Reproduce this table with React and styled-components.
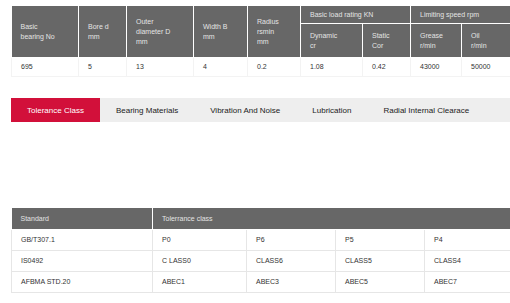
import React from "react";
import styled, { createGlobalStyle } from "styled-components";

const GlobalStyle = createGlobalStyle`
  html, body {
    margin: 0;
    padding: 0;
    background: #fff;
    overflow: hidden;
  }
  body {
    font-family: "Liberation Sans", Arial, sans-serif;
    color: #333;
  }
`;

const Page = styled.div`
  width: 510px;
  height: 303px;
  padding: 6px 0 0 11px;
  box-sizing: border-box;
  overflow: hidden;
`;

const Table = styled.table`
  border-collapse: collapse;
  table-layout: fixed;
  width: ${({ $width }) => $width}px;
  font-size: 7px;
`;

const Head = styled.th`
  background: #676767;
  color: #e4e4e4;
  font-weight: normal;
  text-align: left;
  vertical-align: middle;
  line-height: 10px;
  padding: 0 0 0 9px;
  height: ${({ $h }) => $h || 17}px;
  border: 1px solid #fff;
  border-top: none;
  &:first-child {
    border-left: none;
  }
`;

const Cell = styled.td`
  height: ${({ $h }) => $h || 18}px;
  padding: 0 0 0 9px;
  border: 1px solid ${({ $faint }) => ($faint ? "#f3f3f3" : "#e6e6e6")};
  color: #333;
  line-height: 10px;
`;

const TabBar = styled.div`
  display: flex;
  margin-top: 21px;
  width: 510px;
  height: 24px;
  background: #eeeeee;
`;

const Tab = styled.div`
  display: flex;
  align-items: center;
  padding: 0 16px;
  font-size: 8px;
  color: ${({ $active }) => ($active ? "#fff" : "#222")};
  background: ${({ $active }) => ($active ? "#d2103a" : "transparent")};
`;

const Spacer = styled.div`
  height: 86px;
`;

const topCols = [67, 48, 67, 54, 53, 62, 48, 51, 51];

const tabs = [
  "Tolerance Class",
  "Bearing Materials",
  "Vibration And Noise",
  "Lubrication",
  "Radial Internal Clearace",
];

const stdRows = [
  ["GB/T307.1", "P0", "P6", "P5", "P4"],
  ["IS0492", "C LASS0", "CLASS6", "CLASS5", "CLASS4"],
  ["AFBMA STD.20", "ABEC1", "ABEC3", "ABEC5", "ABEC7"],
];

const stdCols = [141, 94, 89, 89, 89];

export default function App() {
  return (
    <>
      <GlobalStyle />
      <Page>
        <Table $width={topCols.reduce((a, b) => a + b, 0)}>
          <colgroup>
            {topCols.map((w, i) => (
              <col key={i} style={{ width: w }} />
            ))}
          </colgroup>
          <thead>
            <tr>
              <Head rowSpan={2}>Basic<br />bearing No</Head>
              <Head rowSpan={2}>Bore d<br />mm</Head>
              <Head rowSpan={2}>Outer<br />diameter D<br />mm</Head>
              <Head rowSpan={2}>Width B<br />mm</Head>
              <Head rowSpan={2}>Radius<br />rsmin<br />mm</Head>
              <Head colSpan={2}>Basic load rating KN</Head>
              <Head colSpan={2}>Limiting speed rpm</Head>
            </tr>
            <tr>
              <Head $h={33}>Dynamic<br />cr</Head>
              <Head $h={33}>Static<br />Cor</Head>
              <Head $h={33}>Grease<br />r/min</Head>
              <Head $h={33}>Oil<br />r/min</Head>
            </tr>
          </thead>
          <tbody>
            <tr>
              {["695", "5", "13", "4", "0.2", "1.08", "0.42", "43000", "50000"].map((v, i) => (
                <Cell key={i} $faint>{v}</Cell>
              ))}
            </tr>
          </tbody>
        </Table>

        <TabBar>
          {tabs.map((t, i) => (
            <Tab key={t} $active={i === 0}>{t}</Tab>
          ))}
        </TabBar>

        <Spacer />

        <Table $width={stdCols.reduce((a, b) => a + b, 0)}>
          <colgroup>
            {stdCols.map((w, i) => (
              <col key={i} style={{ width: w }} />
            ))}
          </colgroup>
          <thead>
            <tr>
              <Head $h={21}>Standard</Head>
              <Head $h={21} colSpan={4}>Tolerrance class</Head>
            </tr>
          </thead>
          <tbody>
            {stdRows.map((row) => (
              <tr key={row[0]}>
                {row.map((v, i) => (
                  <Cell key={i} $h={20}>{v}</Cell>
                ))}
              </tr>
            ))}
          </tbody>
        </Table>
      </Page>
    </>
  );
}
